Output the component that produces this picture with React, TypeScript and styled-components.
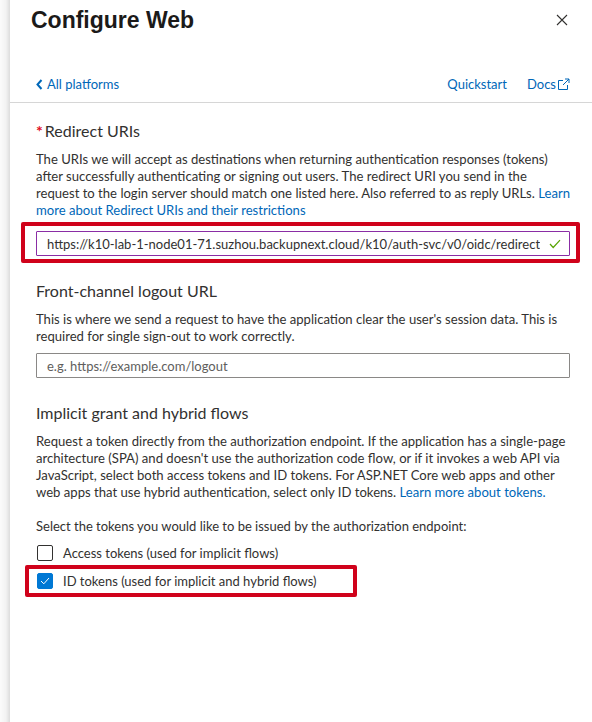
import styled, { createGlobalStyle } from "styled-components";

const GlobalStyle = createGlobalStyle`
  html, body {
    margin: 0;
    padding: 0;
    background: #ffffff;
  }
  body {
    font-family: Lato, "Noto Sans", sans-serif;
    color: #323130;
    -webkit-font-smoothing: antialiased;
  }
`;

const tokenOptions = [
  { id: "access", label: "Access tokens (used for implicit flows)", checked: false, highlight: false },
  { id: "id", label: "ID tokens (used for implicit and hybrid flows)", checked: true, highlight: true },
];

const App = () => {
  return (
    <>
      <GlobalStyle />
      <Page>
        <Gutter />
        <Panel>
          <Header>
            <Title>Configure Web</Title>
            <CloseButton aria-label="Close">
              <svg width="12" height="12" viewBox="0 0 12 12">
                <path d="M1 1 L11 11 M11 1 L1 11" stroke="#323130" strokeWidth="1.1" fill="none" />
              </svg>
            </CloseButton>
          </Header>

          <NavRow>
            <BackLink href="#">
              <svg width="7" height="11" viewBox="0 0 7 11">
                <path d="M5.5 1 L1.5 5.5 L5.5 10" stroke="#0067b8" strokeWidth="2" fill="none" />
              </svg>
              All platforms
            </BackLink>
            <NavLinks>
              <Link href="#">Quickstart</Link>
              <Link href="#">
                Docs
                <svg width="13" height="13" viewBox="0 0 13 13">
                  <path d="M6 2.5 H1.5 V11.5 H10.5 V7" stroke="#0067b8" strokeWidth="1" fill="none" />
                  <path d="M6 7 L12 1 M8 1 H12 V5" stroke="#0067b8" strokeWidth="1" fill="none" />
                </svg>
              </Link>
            </NavLinks>
          </NavRow>

          <Content>
            <Section>
              <Heading>
                <Required>*</Required>Redirect URIs
              </Heading>
              <Description>
                The URIs we will accept as destinations when returning authentication responses (tokens)
                after successfully authenticating or signing out users. The redirect URI you send in the
                request to the login server should match one listed here. Also referred to as reply URLs.{" "}
                <Link href="#">Learn more about Redirect URIs and their restrictions</Link>
              </Description>
              <UriHighlight>
                <TextField $active>
                  <FieldText>https://k10-lab-1-node01-71.suzhou.backupnext.cloud/k10/auth-svc/v0/oidc/redirect</FieldText>
                  <svg width="12" height="10" viewBox="0 0 12 10">
                    <path d="M1 5 L4.2 8.5 L11 1.2" stroke="#57a300" strokeWidth="1.2" fill="none" />
                  </svg>
                </TextField>
              </UriHighlight>
            </Section>

            <Section>
              <Heading>Front-channel logout URL</Heading>
              <Description>
                This is where we send a request to have the application clear the user's session data. This is
                required for single sign-out to work correctly.
              </Description>
              <TextField>
                <Placeholder>e.g. https://example.com/logout</Placeholder>
              </TextField>
            </Section>

            <Section>
              <Heading>Implicit grant and hybrid flows</Heading>
              <Description>
                Request a token directly from the authorization endpoint. If the application has a single-page
                architecture (SPA) and doesn't use the authorization code flow, or if it invokes a web API via
                JavaScript, select both access tokens and ID tokens. For ASP.NET Core web apps and other
                web apps that use hybrid authentication, select only ID tokens.{" "}
                <Link href="#">Learn more about tokens.</Link>
              </Description>
              <SubLabel>Select the tokens you would like to be issued by the authorization endpoint:</SubLabel>
              <CheckList>
                {tokenOptions.map((opt) => (
                  <CheckRow key={opt.id} $highlight={opt.highlight}>
                    <CheckBox $checked={opt.checked}>
                      {opt.checked && (
                        <svg width="10" height="8" viewBox="0 0 10 8">
                          <path d="M1 4 L3.8 6.8 L9 1" stroke="#ffffff" strokeWidth="1" fill="none" />
                        </svg>
                      )}
                    </CheckBox>
                    <span>{opt.label}</span>
                  </CheckRow>
                ))}
              </CheckList>
            </Section>
          </Content>
        </Panel>
      </Page>
    </>
  );
};

export default App;

const Page = styled.div`
  display: flex;
  min-height: 722px;
`;

const Gutter = styled.div`
  width: 10px;
  flex-shrink: 0;
  background: linear-gradient(to right, #fbfbfb 0%, #f2f2f2 60%, #dcdcdc 100%);
`;

const Panel = styled.div`
  flex: 1;
  background: #ffffff;
  display: flex;
  flex-direction: column;
`;

const Header = styled.div`
  display: flex;
  align-items: center;
  justify-content: space-between;
  padding: 6px 20px 0 21px;
  height: 28px;
`;

const Title = styled.h1`
  margin: 0;
  font-family: "Liberation Sans", Arial, sans-serif;
  font-weight: 700;
  font-size: 23px;
  line-height: 28px;
  color: #1b1a19;
`;

const CloseButton = styled.button`
  border: none;
  background: none;
  padding: 0;
  width: 20px;
  height: 20px;
  display: flex;
  align-items: center;
  justify-content: center;
  cursor: pointer;
`;

const NavRow = styled.div`
  display: flex;
  align-items: center;
  justify-content: space-between;
  margin-top: 41px;
  padding: 0 22px 9px 26px;
  border-bottom: 1px solid #d6d6d6;
  height: 18px;
`;

const Link = styled.a`
  color: #0067b8;
  text-decoration: none;
  font-size: 13px;
  display: inline-flex;
  align-items: center;
  gap: 1px;
`;

const BackLink = styled(Link)`
  gap: 4px;
`;

const NavLinks = styled.div`
  display: flex;
  align-items: center;
  gap: 20px;
`;

const Content = styled.div`
  padding: 17px 22px 0 26px;
  display: flex;
  flex-direction: column;
  gap: 24px;
`;

const Section = styled.div`
  display: flex;
  flex-direction: column;
`;

const Heading = styled.h2`
  margin: 0 0 9px;
  font-size: 16px;
  line-height: 22px;
  font-weight: 400;
  color: #323130;
`;

const Required = styled.span`
  color: #e00b1c;
  font-weight: 700;
  margin-right: 2px;
`;

const Description = styled.p`
  margin: 0;
  font-size: 13.1px;
  line-height: 17px;
  color: #323130;

  ${Link} {
    display: inline;
    font-size: inherit;
  }
`;

const UriHighlight = styled.div`
  margin: 3px -10px -7px -15px;
  border: 4px solid #d0021b;
  border-radius: 2px;
  padding: 5px 6px 3px 11px;
`;

const TextField = styled.div<{ $active?: boolean }>`
  height: 25px;
  box-sizing: border-box;
  border: 1px solid ${(p) => (p.$active ? "#8a2da5" : "#8a8886")};
  border-radius: 1px;
  display: flex;
  align-items: center;
  justify-content: space-between;
  padding: 0 8px 0 10px;
  margin-top: ${(p) => (p.$active ? "0" : "8px")};
`;

const FieldText = styled.span`
  font-size: 13px;
  color: #323130;
  white-space: nowrap;
  overflow: hidden;
`;

const Placeholder = styled.span`
  font-size: 13px;
  color: #605e5c;
`;

const SubLabel = styled.div`
  margin-top: 17px;
  font-size: 13px;
  line-height: 17px;
`;

const CheckList = styled.div`
  display: flex;
  flex-direction: column;
  margin-top: 6px;
  gap: 4px;
`;

const CheckRow = styled.label<{ $highlight?: boolean }>`
  display: flex;
  align-items: center;
  gap: 10px;
  font-size: 13px;
  height: 24px;
  box-sizing: border-box;
  align-self: flex-start;
  ${(p) =>
    p.$highlight
      ? `
    border: 4px solid #d0021b;
    border-radius: 2px;
    height: 32px;
    margin: -4px 0 0 -11px;
    padding: 0 36px 0 7px;
  `
      : ""}
`;

const CheckBox = styled.span<{ $checked?: boolean }>`
  width: 16px;
  height: 16px;
  box-sizing: border-box;
  border-radius: 2px;
  border: 1px solid ${(p) => (p.$checked ? "#0078d4" : "#323130")};
  background: ${(p) => (p.$checked ? "#0078d4" : "#ffffff")};
  display: flex;
  align-items: center;
  justify-content: center;
  margin-left: 1px;
`;
